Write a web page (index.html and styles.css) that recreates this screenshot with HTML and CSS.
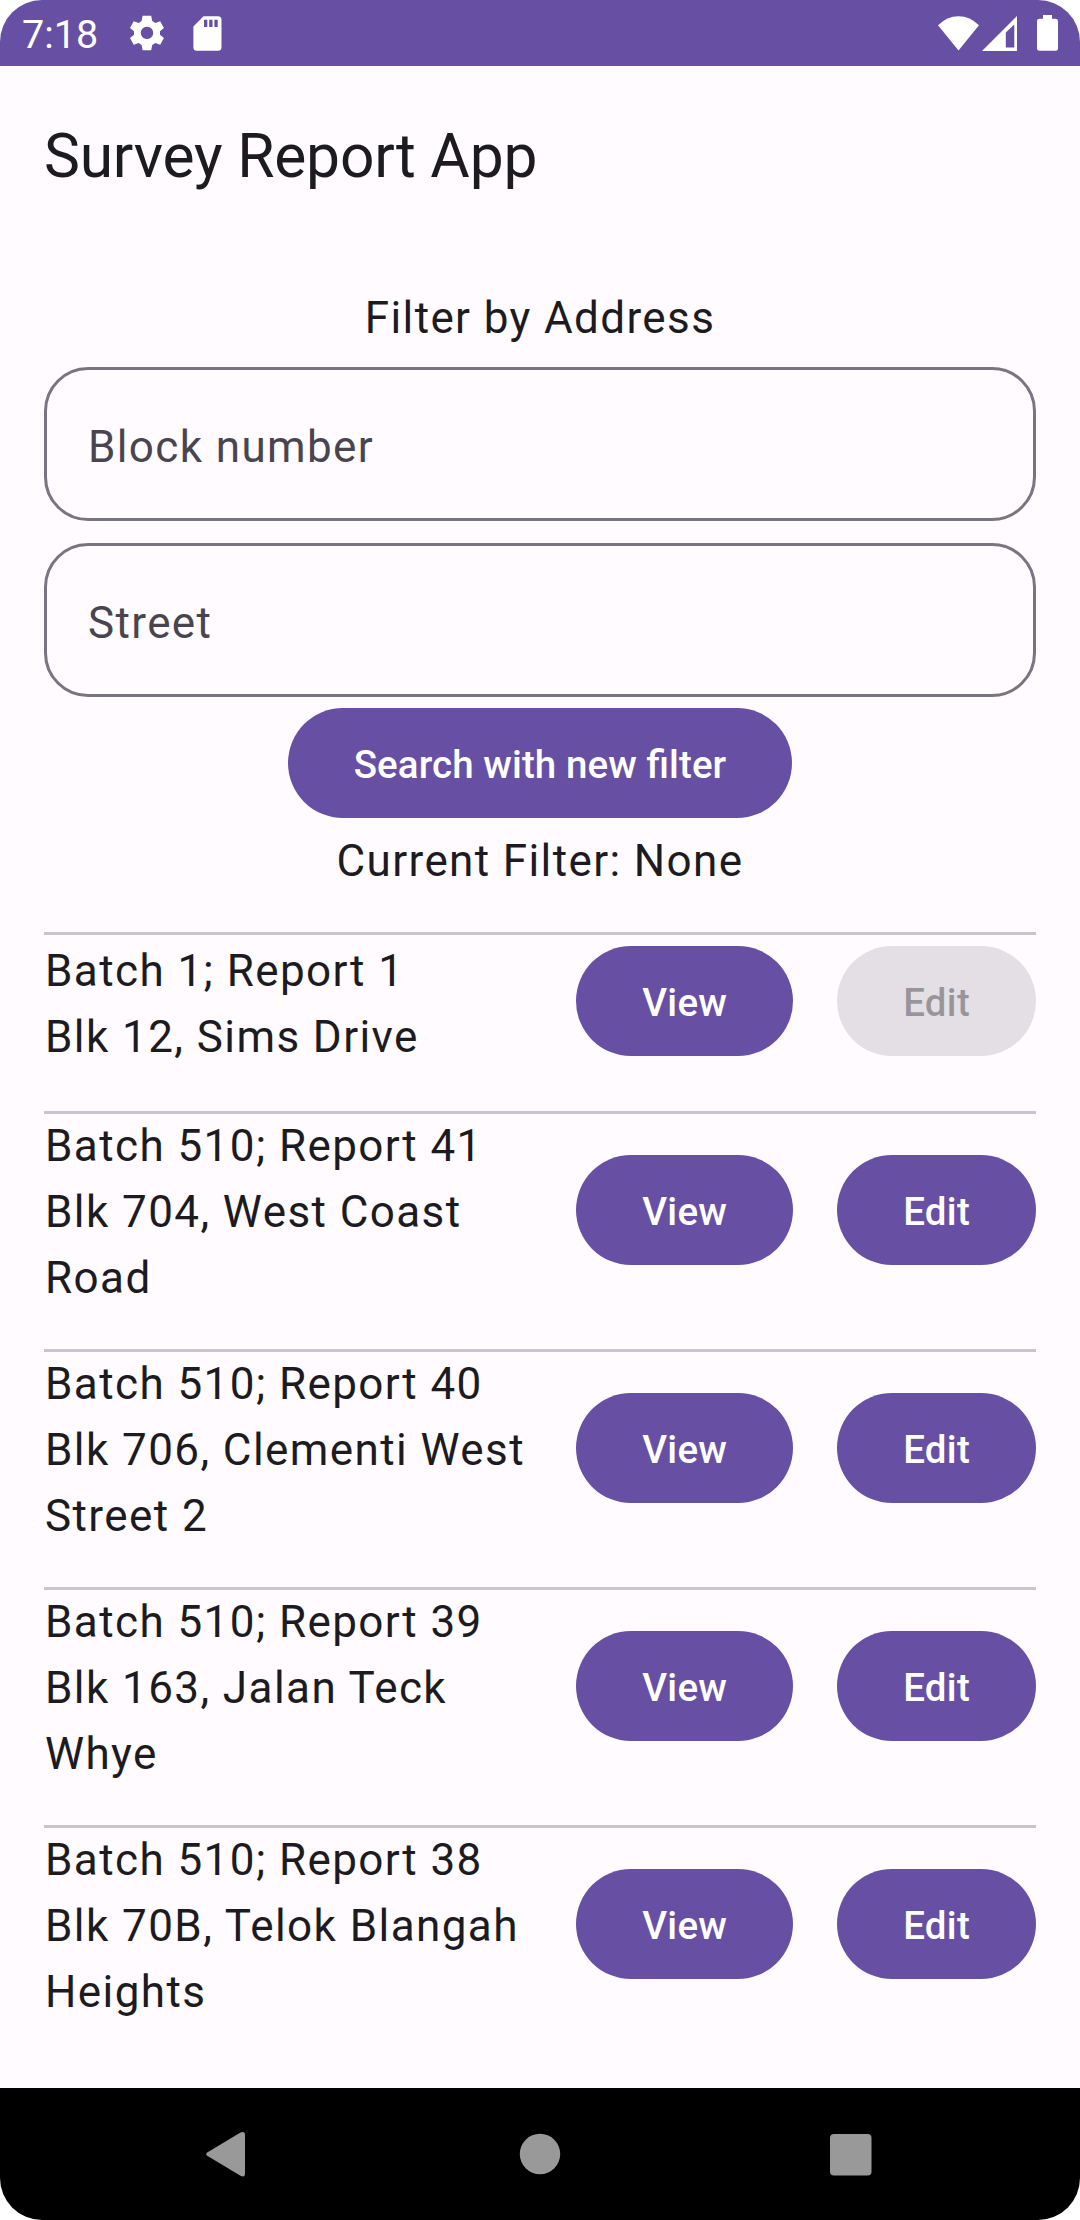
FILE: index.html
```html
<!DOCTYPE html>
<html lang="en">
<head>
<meta charset="utf-8">
<title>Survey Report App</title>
<link rel="stylesheet" href="styles.css">
</head>
<body>
<div class="screen">
  <header class="status">
    <span class="time">7:18</span>
    <svg class="gear" viewBox="0 0 34 36" width="34" height="36"><path fill-rule="evenodd" d="M12.6 0.8 H21.2 L22.2 6 L25.4 7.9 L30.2 6.2 L33.9 12.9 L30 16.3 V19.7 L33.9 23 L30.2 29.7 L25.4 28 L22.2 29.9 L21.2 35.2 H12.6 L11.6 29.9 L8.6 28 L3.7 29.7 L0 23 L4 19.7 V16.3 L0 12.9 L3.7 6.2 L8.6 7.9 L11.6 6 Z M17 11.7 a6.2 6.2 0 1 0 .01 0 Z"/></svg>
    <svg class="sd" viewBox="0 0 29 35" width="29" height="35"><path fill-rule="evenodd" d="M10.5 0.3 H25 Q28.5 0.3 28.5 3.8 V31.2 Q28.5 34.7 25 34.7 H3.8 Q0.4 34.7 0.4 31.2 V10.4 Z M11 3.8 V11 H14.3 V3.8 Z M16.2 3.8 V11 H19.5 V3.8 Z M21.4 3.8 V11 H24.7 V3.8 Z"/></svg>
    <span class="spacer"></span>
    <svg class="wifi" viewBox="0 0 42 35" width="42" height="35"><path d="M0 9.3 Q9 0.2 20.5 0.2 T41 9.3 L20.5 34.6 Z"/></svg>
    <svg class="signal" viewBox="0 0 35 35" width="35" height="35"><path fill-rule="evenodd" d="M35 0 V35 H0 Z M32.3 8.5 L23.8 16.5 V31.6 H32.3 Z"/></svg>
    <svg class="battery" viewBox="0 0 21 36" width="21" height="36"><path d="M6 0 H15 V3.8 H18.6 Q21 3.8 21 6.2 V33.4 Q21 35.7 18.6 35.7 H2.4 Q0 35.7 0 33.4 V6.2 Q0 3.8 2.4 3.8 H6 Z"/></svg>
  </header>

  <h1 class="appbar">Survey Report App</h1>

  <main class="content">
    <p class="body-text center">Filter by Address</p>
    <div class="field"><span class="body-text">Block number</span></div>
    <div class="field"><span class="body-text">Street</span></div>
    <button class="btn search">Search with new filter</button>
    <p class="body-text center">Current Filter: None</p>

    <ul class="reports">
      <li class="report">
        <p class="body-text">Batch 1; Report 1<br>Blk 12, Sims Drive</p>
        <button class="btn">View</button><button class="btn" disabled>Edit</button>
      </li>
      <li class="report">
        <p class="body-text">Batch 510; Report 41<br>Blk 704, West Coast Road</p>
        <button class="btn">View</button><button class="btn">Edit</button>
      </li>
      <li class="report">
        <p class="body-text">Batch 510; Report 40<br>Blk 706, Clementi West Street 2</p>
        <button class="btn">View</button><button class="btn">Edit</button>
      </li>
      <li class="report">
        <p class="body-text">Batch 510; Report 39<br>Blk 163, Jalan Teck Whye</p>
        <button class="btn">View</button><button class="btn">Edit</button>
      </li>
      <li class="report">
        <p class="body-text">Batch 510; Report 38<br>Blk 70B, Telok Blangah Heights</p>
        <button class="btn">View</button><button class="btn">Edit</button>
      </li>
    </ul>
  </main>

  <nav class="navbar">
    <svg viewBox="0 0 60 60" width="60" height="60"><path d="M8.2 28.6 L41.5 8.5 Q46 6.5 46 11 V49.5 Q46 54 41.5 51.8 L8.2 31.8 Q6.2 30.2 8.2 28.6 Z"/></svg>
    <svg viewBox="0 0 60 60" width="60" height="60"><circle cx="30" cy="30" r="20.2"/></svg>
    <svg viewBox="0 0 60 60" width="60" height="60"><rect x="9" y="10" width="41.5" height="41.4" rx="4"/></svg>
  </nav>
</div>
</body>
</html>
```

FILE: styles.css
```css
* { box-sizing: border-box; }

html { background: #fff; }

body {
  margin: 0;
  background: #fff;
  font-family: Roboto, sans-serif;
  color: #1c1b1f;
}

h1, p, ul { margin: 0; padding: 0; }

.screen {
  width: 1080px;
  height: 2220px;
  display: flex;
  flex-direction: column;
  background: #fffbff;
  border-radius: 42px;
  overflow: hidden;
}

.status {
  height: 66px;
  flex: none;
  display: flex;
  align-items: center;
  padding: 0 22px;
  background: #6750a4;
  color: #fff;
  fill: #fff;
}

.time {
  font-size: 39.5px;
  line-height: 66px;
  padding-top: 3px;
  width: 108px;
}

.sd { margin-left: 29px; }
.spacer { flex: 1; }
.signal { margin-left: 2px; }
.battery { margin-left: 20px; }

.appbar {
  height: 176px;
  flex: none;
  padding: 5px 44px 0;
  font-size: 60.5px;
  font-weight: 400;
  line-height: 172px;
  letter-spacing: -0.2px;
}

.content {
  flex: 1;
  min-height: 0;
  display: flex;
  flex-direction: column;
  padding: 44px 44px 0;
}

.body-text {
  font-size: 44px;
  line-height: 66px;
  letter-spacing: 1.375px;
  margin: -1px 0 -6px;
}

.center { text-align: center; }

.field {
  height: 154px;
  flex: none;
  display: flex;
  align-items: center;
  margin-top: 22px;
  padding: 0 41px;
  border: 3px solid #79747e;
  border-radius: 44px;
  color: #49454f;
}

.btn {
  height: 110px;
  flex: none;
  padding: 3px 66px 0;
  border: 0;
  border-radius: 55px;
  background: #6750a4;
  color: #fff;
  font: 500 38.5px/55px Roboto, sans-serif;
  letter-spacing: 0.275px;
  font-feature-settings: "liga" 1;
}

.btn:disabled {
  background: rgba(28, 27, 31, 0.12);
  color: rgba(28, 27, 31, 0.38);
}

.search {
  align-self: center;
  margin: 11px 0;
  letter-spacing: 0.09px;
}

.reports {
  list-style: none;
  margin-top: 44px;
}

.report {
  display: flex;
  align-items: center;
  gap: 44px;
  min-height: 135px;
  margin-bottom: 44px;
  border-top: 3px solid #cac4d0;
}

.report .body-text {
  flex: 1;
  padding-left: 1px;
  letter-spacing: 1.42px;
}

.navbar {
  height: 132px;
  flex: none;
  display: grid;
  grid-template-columns: repeat(3, 311px);
  justify-content: center;
  align-items: center;
  justify-items: center;
  background: #000;
  fill: #999;
}
```
